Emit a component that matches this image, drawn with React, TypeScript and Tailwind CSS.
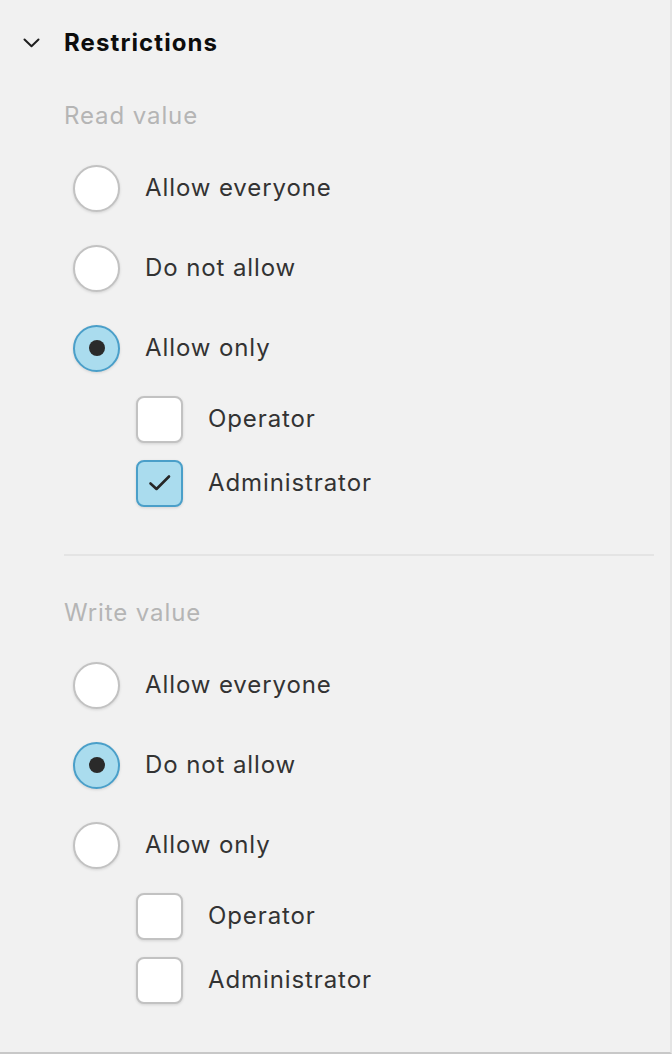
import React from "react";

function Radio({ checked, label }: { checked?: boolean; label: string }) {
  return (
    <div className="flex items-center h-[80px]">
      <div
        className={
          "ml-[9px] w-[47px] h-[47px] rounded-full flex items-center justify-center shadow-[0_1px_3px_rgba(0,0,0,0.12)] " +
          (checked
            ? "bg-[#aadcee] border-[2px] border-[#4a9fc9]"
            : "bg-white border-[2px] border-[#c2c2c2]")
        }
      >
        {checked && <div className="w-[16px] h-[16px] rounded-full bg-[#2a2a2a]" />}
      </div>
      <span className="ml-[25px] text-[24px] leading-[32px] tracking-[0.9px] text-[#333333]">{label}</span>
    </div>
  );
}

function Check({ checked, label }: { checked?: boolean; label: string }) {
  return (
    <div className="flex items-center h-[64px] pl-[72px]">
      <div
        className={
          "w-[47px] h-[47px] rounded-[8px] flex items-center justify-center shadow-[0_1px_3px_rgba(0,0,0,0.12)] " +
          (checked
            ? "bg-[#aadcee] border-[2px] border-[#4a9fc9]"
            : "bg-white border-[2px] border-[#c2c2c2]")
        }
      >
        {checked && (
          <svg width="24" height="20" viewBox="0 0 24 20" fill="none">
            <path d="M2.5 10.5 L8.5 16 L21 3.5" stroke="#262626" strokeWidth="2.6" strokeLinecap="round" strokeLinejoin="round" />
          </svg>
        )}
      </div>
      <span className="ml-[25px] text-[24px] leading-[32px] tracking-[0.9px] text-[#333333]">{label}</span>
    </div>
  );
}

export default function App() {
  return (
    <div
      className="w-[672px] h-[1054px] bg-[#f1f1f1] border-r-[2px] border-r-[#e4e4e4] border-b-[2px] border-b-[#c8c8c8] overflow-hidden"
      style={{ fontFamily: "Inter, 'Noto Sans', sans-serif" }}
    >
      <div className="flex items-center h-[32px] mt-[27px]">
        <div className="w-[64px] flex justify-start pl-[23px]">
          <svg width="17" height="10" viewBox="0 0 17 10" fill="none">
            <path d="M1.5 1.5 L8.5 8.3 L15.5 1.5" stroke="#1f1f1f" strokeWidth="2" strokeLinecap="round" strokeLinejoin="round" />
          </svg>
        </div>
        <span className="text-[24px] leading-[32px] font-bold tracking-[1.1px] text-[#0d0d0d]">Restrictions</span>
      </div>

      <div className="pl-[64px] pr-[16px]">
        <div className="mt-[41px] h-[32px] text-[24px] leading-[32px] tracking-[0.9px] text-[#b5b5b5]">Read value</div>
        <div className="mt-[16px] flex flex-col">
          <Radio label="Allow everyone" />
          <Radio label="Do not allow" />
          <Radio checked label="Allow only" />
          <div className="-mt-[1px]">
            <Check label="Operator" />
            <Check checked label="Administrator" />
          </div>
        </div>
        <div className="mt-[39px] h-[2px] bg-[#e4e4e4]" />
        <div className="mt-[41px] h-[32px] text-[24px] leading-[32px] tracking-[0.9px] text-[#b5b5b5]">Write value</div>
        <div className="mt-[16px] flex flex-col">
          <Radio label="Allow everyone" />
          <Radio checked label="Do not allow" />
          <Radio label="Allow only" />
          <div className="-mt-[1px]">
            <Check label="Operator" />
            <Check label="Administrator" />
          </div>
        </div>
      </div>
    </div>
  );
}
